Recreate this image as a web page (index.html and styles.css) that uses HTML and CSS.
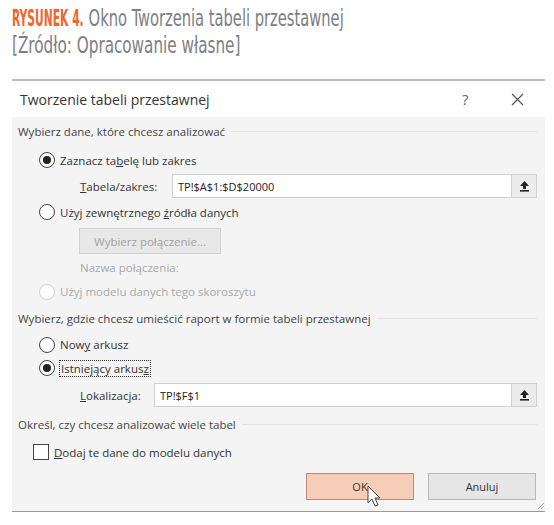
FILE: index.html
```html
<!DOCTYPE html>
<html>
<head>
	<meta charset="utf-8">
	<title>Tworzenie tabeli przestawnej</title>
	<link rel="stylesheet" href="styles.css">
</head>
<body>
	<div class="caption">
		<div class="line l1"><span class="fig">RYSUNEK 4.</span> Okno Tworzenia tabeli przestawnej</div>
		<div class="line l2">[Źródło: Opracowanie własne]</div>
	</div>

	<div class="dialog">
		<div class="titlebar">
			<span class="title">Tworzenie tabeli przestawnej</span>
			<span class="help">?</span>
			<span class="close">
				<svg width="13" height="13" viewBox="0 0 13 13"><path d="M1 1 L12 12 M12 1 L1 12" stroke="#555" stroke-width="1.2" fill="none"/></svg>
			</span>
		</div>

		<div class="body">
			<div class="section sec1">Wybierz dane, które chcesz analizować</div>
			<div class="row r1"><span class="radio on"></span><span>Zaznacz ta<u>b</u>elę lub zakres</span></div>
			<div class="row field f1">
				<span class="label"><u>T</u>abela/zakres:</span>
				<div class="input in1">
					<span class="value">TP!$A$1:$D$20000</span>
					<span class="pick">
						<svg width="11" height="12" viewBox="0 0 11 12"><path d="M5.5 1 L10 6 L7 6 L7 9 L4 9 L4 6 L1 6 Z" fill="#222"/><rect x="1" y="10" width="9" height="1.6" fill="#222"/></svg>
					</span>
				</div>
			</div>
			<div class="row r2"><span class="radio"></span><span>Użyj zewnętrznego <u>ź</u>ródła danych</span></div>
			<div class="row btnrow"><span class="btn-disabled">Wybierz połączenie...</span></div>
			<div class="row muted nazwa">Nazwa połączenia:</div>
			<div class="row muted r3"><span class="radio off"></span><span>Użyj modelu danych tego skoroszytu</span></div>

			<div class="section sec2">Wybierz, gdzie chcesz umieścić raport w formie tabeli przestawnej</div>
			<div class="row r4"><span class="radio"></span><span>Now<u>y</u> arkusz</span></div>
			<div class="row r5"><span class="radio on"></span><span class="focus">Istniejący arkus<u>z</u></span></div>
			<div class="row field f2">
				<span class="label"><u>L</u>okalizacja:</span>
				<div class="input in2">
					<span class="value">TP!$F$1</span>
					<span class="pick">
						<svg width="11" height="12" viewBox="0 0 11 12"><path d="M5.5 1 L10 6 L7 6 L7 9 L4 9 L4 6 L1 6 Z" fill="#222"/><rect x="1" y="10" width="9" height="1.6" fill="#222"/></svg>
					</span>
				</div>
			</div>

			<div class="section sec3">Określ, czy chcesz analizować wiele tabel</div>
			<div class="row r6"><span class="check"></span><span><u>D</u>odaj te dane do modelu danych</span></div>

			<div class="buttons">
				<span class="btn ok">OK
					<svg class="cursor" width="16" height="24" viewBox="0 0 16 24"><path d="M1 1 L1 18 L5 14 L8 21 L11 20 L8 13 L13 13 Z" fill="#fff" stroke="#444" stroke-width="1"/></svg>
				</span>
				<span class="btn cancel">Anuluj</span>
			</div>
			<svg class="grip" width="10" height="10" viewBox="0 0 10 10"><path d="M9 3 L3 9 M9 6 L6 9" stroke="#aaa" stroke-width="1"/></svg>
		</div>
	</div>
</body>
</html>
```

FILE: styles.css
```css
body {
	margin: 0;
	background: #fff;
	font-family: "Open Sans", "Noto Sans", sans-serif;
	color: #333;
}

.caption {
	padding: 5px 0 0 12px;
	height: 73px;
	box-sizing: border-box;
	font-family: "Liberation Sans Narrow", "DejaVu Sans Condensed", "Roboto", sans-serif;
	font-size: 23px;
	line-height: 27px;
	color: #7b7e86;
}

.line {
	transform-origin: left center;
	white-space: nowrap;
}

.l1 { transform: scaleX(0.71); }
.l2 { transform: scaleX(0.735); }

.fig {
	display: inline-block;
	color: #f2652c;
	font-weight: bold;
	transform: scaleX(0.73);
	transform-origin: left center;
	margin-right: -37px;
}

.dialog {
	margin-left: 12px;
	width: 533px;
	border-top: 2px solid #bdbdbd;
	border-bottom: 1px solid #9a9a9a;
	margin-top: 6px;
}

.titlebar {
	height: 36px;
	display: flex;
	align-items: center;
	background: #fff;
	padding-left: 8px;
	font-size: 14px;
	color: #333;
}

.title {
	flex: 1;
}

.help {
	width: 49px;
	font-size: 15px;
	color: #666;
}

.close {
	width: 34px;
	display: flex;
}

.body {
	position: relative;
	background: #f4f4f4;
	padding: 0 8px 11px 6px;
	font-size: 11.5px;
}

.section {
	display: flex;
	align-items: center;
	color: #444;
	white-space: nowrap;
}

.section::after {
	content: "";
	flex: 1;
	border-top: 1px solid #e2e2e2;
	margin-left: 6px;
}

.sec1 { height: 29px; }
.sec2 { height: 31px; }
.sec3 { height: 35px; }

.row {
	display: flex;
	align-items: center;
	padding-left: 21px;
}

.r1 { height: 28px; }
.r2 { height: 28px; }
.r3 { height: 23px; }
.r4 { height: 21px; }
.r5 { height: 26px; }
.r6 { height: 20px; }
.nazwa { height: 26px; padding-left: 62px; }

.radio {
	width: 14px;
	height: 14px;
	border: 1.3px solid #444;
	border-radius: 50%;
	background: #fff;
	margin-right: 5px;
	display: flex;
	align-items: center;
	justify-content: center;
}

.radio.on::after {
	content: "";
	width: 8px;
	height: 8px;
	border-radius: 50%;
	background: #222;
}

.radio.off {
	border-color: #d0d0d0;
}

.muted {
	color: #a8a8a8;
}

.check {
	width: 14px;
	height: 14px;
	border: 1.3px solid #444;
	background: #fff;
	margin-left: -6px;
	margin-right: 5px;
}

.focus {
	border: 1px dotted #333;
	padding: 0 1px;
	margin-left: -1px;
}

.field {
	height: 24px;
	padding-left: 62px;
}

.f2 {
	margin-top: 2px;
}

.label {
	color: #333;
}

.input {
	margin-left: auto;
	height: 24px;
	box-sizing: border-box;
	border: 1px solid #cfcfcf;
	background: #fff;
	display: flex;
	align-items: center;
}

.in1 { width: 365px; }
.in2 { width: 383px; }

.value {
	flex: 1;
	padding-left: 5px;
	font-size: 11px;
	color: #222;
}

.pick {
	width: 24px;
	height: 22px;
	border-left: 1px solid #cfcfcf;
	background: #ececec;
	display: flex;
	align-items: center;
	justify-content: center;
}

.btnrow {
	height: 26px;
	margin-top: 2px;
	padding-left: 61px;
}

.btn-disabled {
	width: 142px;
	height: 26px;
	box-sizing: border-box;
	border: 1px solid #d2d2d2;
	background: #e8e8e8;
	color: #a0a0a0;
	display: flex;
	align-items: center;
	justify-content: center;
}

.buttons {
	display: flex;
	justify-content: flex-end;
	gap: 14px;
	margin-top: 11px;
	padding-right: 1px;
}

.btn {
	position: relative;
	width: 108px;
	height: 27px;
	box-sizing: border-box;
	display: flex;
	align-items: center;
	justify-content: center;
	font-size: 11px;
	color: #333;
}

.ok {
	background: #f6cdb6;
	border: 1px solid #b98a72;
}

.cancel {
	background: #e6e6e6;
	border: 1px solid #b8b8b8;
}

.cursor {
	position: absolute;
	left: 60px;
	top: 11px;
}

.grip {
	position: absolute;
	right: 0;
	bottom: 1px;
}
```
